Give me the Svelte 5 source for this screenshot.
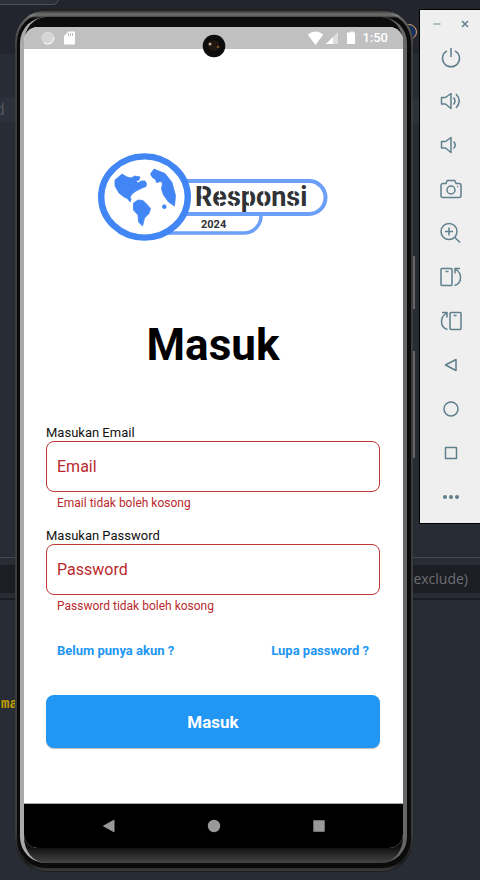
<script>
  const speaker = 'M2.5 8.5h4L12 4.5v15l-5.5-4.5h-4z';
  const turn = 'M3 3.5h9a1 1 0 0 1 1 1v15a1 1 0 0 1-1 1H3a1 1 0 0 1-1-1v-15a1 1 0 0 1 1-1zM6.5 6.5h3M15.5 20.500c4-1 6-4 6-8 0-3.500-2-6.500-5-8.500M21 3.500h-5v5';

  const tools = [
    { name: 'Power', d: 'M8 5.800a8.500 8.500 0 1 0 8 0M12 3v9' },
    { name: 'Volume up', d: speaker + 'M14.500 8.500q3 3.500 0 7M17 5q6.500 7 0 14' },
    { name: 'Volume down', d: speaker + 'M14.500 8.500q3.500 3.500 0 7' },
    {
      name: 'Take screenshot',
      d: 'M4 6.500h3l1.200-3h7.600l1.200 3h3a2 2 0 0 1 2 2v10a2 2 0 0 1-2 2H4a2 2 0 0 1-2-2v-10a2 2 0 0 1 2-2zM16 13a4 4 0 1 1-8 0 4 4 0 0 1 8 0zM18 9.500h1.200'
    },
    { name: 'Zoom', d: 'M18 10.500a8 8 0 1 1-16 0 8 8 0 0 1 16 0zM15.700 16.200l5.300 5.300M6 10.500h8M10 6.500v8' },
    { name: 'Rotate left', d: turn },
    { name: 'Rotate right', d: turn, mirror: true },
    { name: 'Back', d: 'M6.500 12l10.500-5.500v11z' },
    { name: 'Home', d: 'M19 12a7 7 0 1 1-14 0 7 7 0 0 1 14 0z' },
    { name: 'Overview', d: 'M6.500 6.500h11v11h-11z' },
    { name: 'More', d: '', dots: true }
  ];

  let email = $state('');
  let password = $state('');
</script>

<div class="desktop">
  <div class="editor" aria-hidden="true">
    <div class="tab"></div>
    <div class="stripe"><span>d</span></div>
    <div class="ring"></div>
    <div class="filter"><span>(!exclude)</span></div>
    <div class="console"><code>ma</code></div>
  </div>

  <div class="phone">
    <i class="side rocker"></i>
    <i class="side power"></i>
    <div class="case">
      <div class="lens">
        <div class="screen">
          <header class="status">
            <svg class="left" width="36" height="16" viewBox="0 0 36 16" aria-hidden="true">
              <circle cx="8" cy="8" r="6" fill="#d6d6d6" stroke="#dedede" />
              <path d="M4 13a6.500 6.500 0 0 0 10-6" fill="none" stroke="#fff" />
              <path d="M28.500 1.500H34a1 1 0 0 1 1 1v11a1 1 0 0 1-1 1h-9a1 1 0 0 1-1-1V6z" fill="#fff" />
              <path d="M28.500 3v3M30.500 3v3M32.500 3v3" stroke="#bbb" />
            </svg>
            <svg class="right" width="50" height="16" viewBox="0 0 50 16" aria-hidden="true">
              <path d="M8.500 15 .8 4.500Q8.500-1.500 16.200 4.500z" fill="#fff" />
              <path d="M31 2v12H19z" fill="#dedede" />
              <path d="M26 7v7h-7z" fill="#fff" />
              <path d="M42 2.500h1.500V1.500h3v1H48V14h-8V2.500z" fill="#fff" />
            </svg>
            <time>1:50</time>
            <svg class="camera" width="24" height="24" viewBox="0 0 24 24" aria-hidden="true">
              <circle cx="12" cy="12" r="11.300" fill="#0d0d0d" />
              <circle cx="12" cy="11.500" r="5.500" fill="#211512" />
              <circle cx="8" cy="10" r="1.500" fill="#b9a694" />
              <circle cx="16" cy="13" r="1.300" fill="#7e4a22" />
            </svg>
          </header>

          <main>
            <svg class="logo" width="230" height="88" viewBox="0 0 230 88" role="img" aria-label="Responsi 2024">
              <path d="M60 80h86a17 17 0 0 0 17-17v-4" fill="none" stroke="#6b9ff8" stroke-width="3.500" />
              <path d="M70 28h141a16.500 16.500 0 0 1 0 33H70z" fill="#fff" stroke="#6b9ff8" stroke-width="4" />
              <ellipse cx="46.500" cy="44" rx="43.300" ry="40.600" fill="#fff" stroke="#4285f4" stroke-width="6.400" />
              <g fill="#4285f4" stroke="#4285f4" stroke-width=".8" stroke-linejoin="round">
                <path d="M17 27l7-6 5 3 4 1 4-2 5 1-1 3-3 1 2 2 3-2 4 0 1.500 2.500-.5 3-4 1.500-6 3-4 3-2 3 1 2-1 3-2-3-4-2-5-4-4-7z" />
                <path d="M52.500 21l3.500-5 6 2.500 5 2 7 9 3.500 13-1 10.500-6-4-5-7-2-6 1-6-2-1.500-4 1-1-3-3-2z" />
                <path d="M35.500 50l4.500-3 5 .5 4 4 3.500 4-1.500 5-4.500 4.500-2 8-4-4-.5-7-4.500-5z" />
                <circle cx="66.300" cy="53.700" r="1.900" />
              </g>
              <text x="97" y="53" class="brand">Responsi</text>
              <path d="M104 33v21M121.500 37v8M121.500 48v7M136 37v7M136 47v7M151.500 37v17M166 37v17M196 37v7M196 47v7" stroke="#fff" stroke-width="1.300" />
              <text x="103" y="75" class="year">2024</text>
            </svg>

            <h1>Masuk</h1>

            <form novalidate onsubmit={(e) => e.preventDefault()}>
              <div class="field">
                <label for="email">Masukan Email</label>
                <input id="email" type="email" placeholder="Email" aria-describedby="email-error" bind:value={email} />
                <p id="email-error">Email tidak boleh kosong</p>
              </div>
              <div class="field">
                <label for="password">Masukan Password</label>
                <input id="password" type="password" placeholder="Password" aria-describedby="password-error" bind:value={password} />
                <p id="password-error">Password tidak boleh kosong</p>
              </div>
              <div class="links">
                <a href="#daftar">Belum punya akun ?</a>
                <a href="#lupa">Lupa password ?</a>
              </div>
              <button class="submit" type="submit">Masuk</button>
            </form>
          </main>

          <nav>
            <button aria-label="Back"><svg width="14" height="14" viewBox="0 0 14 14"><path d="M1.500 7 12 1.200v11.600z" fill="#999" stroke="#999" stroke-linejoin="round" /></svg></button>
            <button aria-label="Home"><svg width="14" height="14" viewBox="0 0 14 14"><circle cx="7" cy="7" r="6.200" fill="#999" /></svg></button>
            <button aria-label="Overview"><svg width="14" height="14" viewBox="0 0 14 14"><rect x="1.300" y="1.300" width="11.400" height="11.400" rx=".5" fill="#999" /></svg></button>
          </nav>
        </div>
      </div>
    </div>
  </div>

  <aside class="toolbar">
    <div class="window">
      <button aria-label="Minimize"><svg width="10" height="10" viewBox="0 0 10 10"><path d="M1.500 5h7" stroke="#9aafb7" stroke-width="1.500" /></svg></button>
      <button aria-label="Close"><svg width="10" height="10" viewBox="0 0 10 10"><path d="M2 2l6 6M8 2l-6 6" stroke="#607f8b" stroke-width="1.500" /></svg></button>
    </div>
    {#each tools as tool}
      <button class="tool" aria-label={tool.name}>
        <svg class:mirror={tool.mirror} width="24" height="24" viewBox="0 0 24 24">
          {#if tool.dots}
            <g fill="#5f7f8c"><circle cx="6" cy="12" r="2" /><circle cx="12" cy="12" r="2" /><circle cx="18" cy="12" r="2" /></g>
          {:else}
            <path d={tool.d} fill="none" stroke="#5f7f8c" stroke-width="1.500" stroke-linejoin="round" />
          {/if}
        </svg>
      </button>
    {/each}
  </aside>
</div>

<style>
  :global(body) {
    margin: 0;
    background: #282c34;
  }
  .desktop {
    position: relative;
    box-sizing: border-box;
    display: flex;
    align-items: flex-start;
    gap: 6px;
    min-height: 100vh;
    padding: 9px 0 7px 15px;
    overflow: hidden;
    font-family: Roboto, "Liberation Sans", sans-serif;
  }
  button {
    display: flex;
    align-items: center;
    justify-content: center;
    padding: 0;
    border: 0;
    background: none;
    font: inherit;
    cursor: pointer;
  }
  svg {
    display: block;
  }

  /* code editor behind the emulator */
  .editor {
    position: absolute;
    inset: 0;
    background: linear-gradient(#22252d 54px, #282c34 54px);
    color: #6d6f74;
    font-family: "Open Sans", sans-serif;
  }
  .editor > div {
    position: absolute;
    box-sizing: border-box;
  }
  .tab {
    top: -12px;
    left: -8px;
    width: 67px;
    height: 17px;
    border: 1px solid #4b4f57;
    border-radius: 6px;
    background: #2c3038;
  }
  .stripe {
    top: 98px;
    left: 0;
    right: 0;
    height: 24px;
    background: #2d313b;
    line-height: 22px;
    font-size: 16px;
    color: #555961;
  }
  .stripe span {
    margin-left: -5px;
  }
  .ring {
    top: 24px;
    right: 63px;
    width: 16px;
    height: 16px;
    border: 1px solid #e0a066;
    border-radius: 50%;
    background: #17315c;
  }
  .filter {
    top: 557px;
    left: 0;
    right: 0;
    height: 43px;
    padding: 7px 12px 6px;
    border-top: 1px solid #454951;
    border-bottom: 2px solid #1b1d22;
    text-align: right;
    font-size: 14px;
    line-height: 28px;
    background: linear-gradient(#282c34 7px, #1d1e23 7px, #1d1e23 35px, #282c34 35px);
  }
  .console {
    top: 691px;
    left: 1px;
    color: #c4a000;
  }
  .console code {
    font: bold 14px/18px "Liberation Mono", monospace;
  }

  /* phone body */
  .phone {
    position: relative;
    flex: 1;
    min-width: 0;
    box-sizing: border-box;
    padding: 3px 2px;
    border: 1px solid #1c1c1c;
    border-width: 1px 0;
    border-radius: 32px;
    background: linear-gradient(#222, #808080 5px, #606060 9px, #3c3c3c 40px, #3c3c3c 820px, #1c1c1c 853px, #3c3c3c);
  }
  .side {
    position: absolute;
    right: -2px;
    width: 2px;
    background: #666;
  }
  .rocker {
    top: 246px;
    height: 53px;
  }
  .power {
    top: 341px;
    height: 107px;
  }
  .case {
    padding: 4px 4px 5px 3px;
    border-radius: 29px;
    background: linear-gradient(#666 3px, #0b0b0b 5px);
  }
  .lens {
    padding: 10px 0 15px;
    border: solid;
    border-width: 0 4px;
    border-color: transparent #666 transparent #aaa;
    border-radius: 26px;
    background: linear-gradient(#0c0c0c 98%, #444);
  }
  .screen {
    overflow: hidden;
    border-radius: 14px;
    background: #fff;
  }
  .status {
    position: relative;
    display: flex;
    align-items: center;
    height: 22px;
    padding: 0 15px 0 16px;
    background: #c0c0c0;
    color: #fff;
  }
  .status .right {
    margin: 0 5px 0 auto;
  }
  .status time {
    font-size: 13px;
    line-height: 22px;
    font-weight: 500;
  }
  .camera {
    position: absolute;
    left: calc(50% - 12px);
    top: 7px;
  }
  main {
    padding: 104px 23px 55px 22px;
  }
  .logo {
    margin: 0 auto;
  }
  .brand {
    font: 700 27px Roboto, sans-serif;
    fill: #303236;
  }
  .year {
    font: 700 11px Roboto, sans-serif;
    fill: #303236;
  }
  h1 {
    margin: 78px 0 53px;
    text-align: center;
    font-size: 44px;
    line-height: 52px;
    font-weight: 700;
    color: #000;
  }
  .field {
    display: flex;
    flex-direction: column;
    margin-bottom: 17px;
  }
  label {
    font-size: 13px;
    line-height: 17px;
    color: #111;
  }
  input {
    box-sizing: border-box;
    width: 100%;
    height: 51px;
    padding: 0 10px;
    border: 1px solid #c03538;
    border-radius: 8px;
    background: #fff;
    color: #222;
    font: 16px Roboto, sans-serif;
  }
  input::placeholder {
    color: #b92a2e;
    opacity: 1;
  }
  .field p {
    margin: 4px 11px 0;
    font-size: 12px;
    line-height: 14px;
    color: #b92a2e;
  }
  .links {
    display: flex;
    justify-content: space-between;
    margin: 30px 11px 36px;
  }
  .links a {
    color: #2196f3;
    font-size: 13px;
    line-height: 16px;
    font-weight: 700;
    text-decoration: none;
  }
  .submit {
    width: 100%;
    height: 53px;
    border-radius: 8px;
    background: #2196f3;
    box-shadow: 0 1px 1px #bbb;
    color: #fff;
    font-size: 17px;
    font-weight: 700;
  }
  nav {
    display: flex;
    align-items: center;
    justify-content: center;
    gap: 61px;
    height: 44px;
    border-top: 1px solid #aaa;
    background: #000;
  }
  nav button {
    width: 44px;
    height: 44px;
  }

  /* emulator toolbar */
  .toolbar {
    position: relative;
    box-sizing: border-box;
    width: 61px;
    padding-bottom: 4px;
    border: 1px solid #000;
    border-right: 0;
    background: #efefef;
  }
  .window {
    display: flex;
    justify-content: space-between;
    padding: 9px 10px 6px 12px;
  }
  .tool {
    width: 100%;
    height: 44px;
    padding-left: 2px;
  }
  .mirror {
    transform: scaleX(-1);
  }
</style>
